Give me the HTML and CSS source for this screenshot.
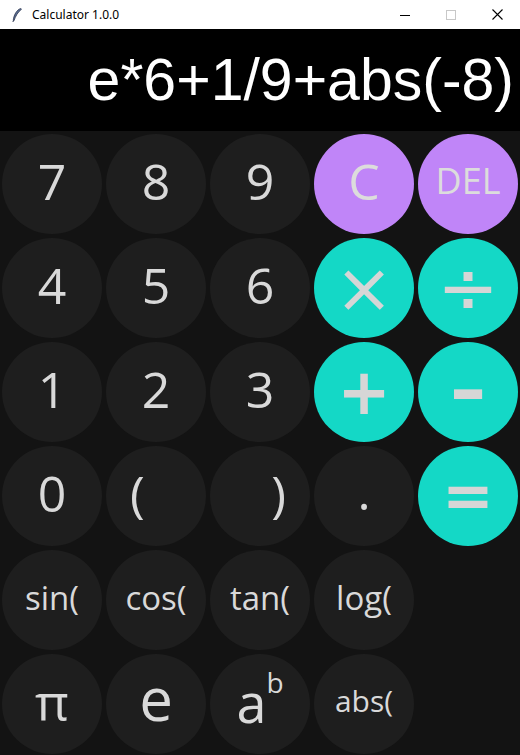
FILE: index.html
```html
<!DOCTYPE html>
<html>
<head>
<meta charset="utf-8">
<title>Calculator 1.0.0</title>
<link rel="stylesheet" href="styles.css">
</head>
<body>
<div class="window">
  <div class="titlebar">
    <svg class="app-icon" width="16" height="16" viewBox="0 0 16 16">
      <path d="M11.5 1.5 C8 3 5 7 4.2 13.5 L5 13.7 C6.5 9 9 5 12.5 2.2 Z" fill="#5a6d92" stroke="#2c3650" stroke-width="0.8"/>
      <path d="M4.6 13.6 L3.8 15" stroke="#2c3650" stroke-width="1"/>
    </svg>
    <span class="title">Calculator 1.0.0</span>
    <div class="controls">
      <span class="ctl min"><svg width="10" height="10" viewBox="0 0 10 10"><path d="M0 5.5H10" stroke="#000" stroke-width="1"/></svg></span>
      <span class="ctl max"><svg width="10" height="10" viewBox="0 0 10 10"><rect x="0.5" y="0.5" width="9" height="9" fill="none" stroke="#c8c8c8" stroke-width="1"/></svg></span>
      <span class="ctl close"><svg width="11" height="11" viewBox="0 0 11 11"><path d="M0.5 0.5L10.5 10.5M10.5 0.5L0.5 10.5" stroke="#000" stroke-width="1.1"/></svg></span>
    </div>
  </div>
  <div class="display">e*6+1/9+abs(-8)</div>
  <div class="keypad">
    <button class="key num">7</button>
    <button class="key num">8</button>
    <button class="key num">9</button>
    <button class="key clear">C</button>
    <button class="key clear del">DEL</button>

    <button class="key num">4</button>
    <button class="key num">5</button>
    <button class="key num">6</button>
    <button class="key op times">×</button>
    <button class="key op divide">÷</button>

    <button class="key num">1</button>
    <button class="key num">2</button>
    <button class="key num">3</button>
    <button class="key op plus">+</button>
    <button class="key op minus"><span class="minus-glyph">-</span></button>

    <button class="key num">0</button>
    <button class="key num paren-l">(</button>
    <button class="key num paren-r">)</button>
    <button class="key num dot">.</button>
    <button class="key op equals">=</button>

    <button class="key fn">sin(</button>
    <button class="key fn">cos(</button>
    <button class="key fn">tan(</button>
    <button class="key fn">log(</button>
    <span class="blank"></span>

    <button class="key const pi">π</button>
    <button class="key const e">e</button>
    <button class="key const pow">a<sup>b</sup></button>
    <button class="key fn abs">abs(</button>
    <span class="blank"></span>
  </div>
</div>
</body>
</html>
```

FILE: styles.css
```css
* { box-sizing: border-box; }

html, body {
  margin: 0;
  padding: 0;
  background: #131313;
}

.window {
  width: 520px;
  height: 755px;
  display: flex;
  flex-direction: column;
  background: #131313;
  overflow: hidden;
}

.titlebar {
  height: 29px;
  background: #ffffff;
  display: flex;
  align-items: center;
  padding-left: 9px;
  font-family: "Noto Sans", "Open Sans", sans-serif;
  font-size: 12px;
  color: #000;
  flex: none;
}

.app-icon { margin-right: 7px; margin-top: 1px; }

.controls {
  margin-left: auto;
  display: flex;
  height: 100%;
}

.ctl {
  width: 46px;
  height: 100%;
  display: flex;
  align-items: center;
  justify-content: center;
}

.display {
  height: 102px;
  background: #000;
  color: #ffffff;
  font-family: "Liberation Sans", Arial, sans-serif;
  font-size: 59px;
  display: flex;
  align-items: center;
  justify-content: flex-end;
  padding-right: 6px;
  white-space: nowrap;
  flex: none;
}

.keypad {
  display: grid;
  grid-template-columns: repeat(5, 100px);
  grid-auto-rows: 100px;
  gap: 4px;
  padding: 3px 2px 0 2px;
}

.key {
  width: 100px;
  height: 100px;
  border: none;
  border-radius: 50%;
  background: #1e1e1e;
  color: #d9d9d9;
  font-family: "Open Sans", "Noto Sans", sans-serif;
  font-weight: 400;
  display: flex;
  align-items: center;
  justify-content: center;
  padding: 0 0 6px 0;
  margin: 0;
  line-height: 1;
}

.num { font-size: 50px; }

.paren-l { justify-content: flex-start; padding-left: 24px; }
.paren-r { justify-content: flex-end; padding-right: 24px; }
.dot { padding-bottom: 10px; }

.clear {
  background: #c085f8;
  color: #dcdcdc;
  font-size: 50px;
}
.clear.del { font-size: 36px; }

.op {
  background: #14d8c6;
  color: #d6d6d6;
  font-family: "DejaVu Sans", sans-serif;
  font-weight: 700;
  font-size: 64px;
  padding: 0;
}
.times { font-weight: 400; font-size: 70px; }
.divide { font-weight: 400; font-size: 74px; }
.plus { font-size: 64px; }
.minus { font-size: 68px; padding-bottom: 2px; }
.minus-glyph { display: inline-block; transform: scaleX(1.35); }
.equals { font-size: 62px; }

.fn { font-size: 33px; }
.fn.abs { font-size: 30px; }

.const { font-size: 54px; }
.pi { font-size: 52px; }
.e { font-size: 60px; padding-bottom: 12px; }
.pow { font-size: 54px; padding-bottom: 4px; }
.pow sup { font-size: 28px; vertical-align: 0; position: relative; top: -20px; margin-left: 0; }

.blank { width: 100px; height: 100px; }
```
